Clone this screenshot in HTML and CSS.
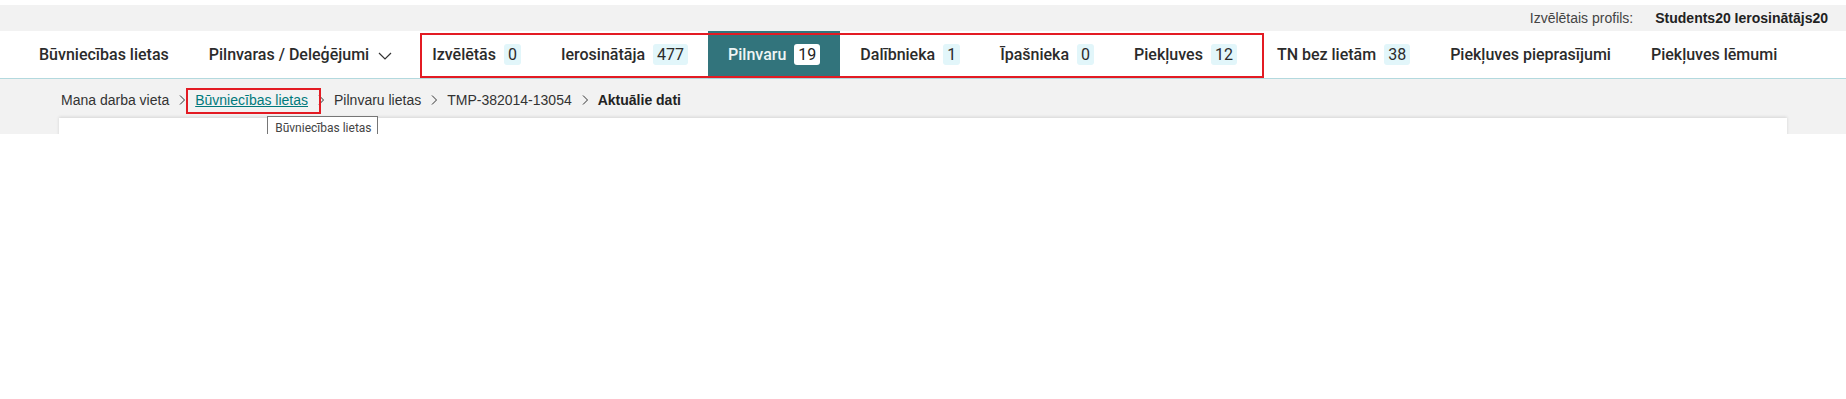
FILE: index.html
```html
<!DOCTYPE html>
<html lang="lv">
<head>
<meta charset="utf-8">
<title>Pilnvaru lietas</title>
<link rel="stylesheet" href="styles.css">
</head>
<body>
<div class="page">
  <div class="topbar">
    <span class="profile-label">Izvēlētais profils:</span>
    <span class="profile-name">Students20 Ierosinātājs20</span>
  </div>
  <nav class="nav">
    <a class="nav-item">Būvniecības lietas</a>
    <a class="nav-item">Pilnvaras / Deleģējumi
      <svg class="chev-down" width="14" height="8" viewBox="0 0 14 8"><path d="M1 1 L7 7 L13 1" fill="none" stroke="#333" stroke-width="1.2"/></svg>
    </a>
    <div class="nav-group">
      <a class="nav-item">Izvēlētās <span class="badge">0</span></a>
      <a class="nav-item">Ierosinātāja <span class="badge">477</span></a>
      <a class="nav-item active">Pilnvaru <span class="badge">19</span></a>
      <a class="nav-item">Dalībnieka <span class="badge">1</span></a>
      <a class="nav-item">Īpašnieka <span class="badge">0</span></a>
      <a class="nav-item">Piekļuves <span class="badge">12</span></a>
    </div>
    <a class="nav-item">TN bez lietām <span class="badge">38</span></a>
    <a class="nav-item">Piekļuves pieprasījumi</a>
    <a class="nav-item">Piekļuves lēmumi</a>
  </nav>
  <div class="content">
    <div class="breadcrumb">
      <span class="crumb">Mana darba vieta</span>
      <svg class="sep" width="6" height="10" viewBox="0 0 6 10"><path d="M1 0.5 L5.5 5 L1 9.5" fill="none" stroke="#333" stroke-width="1"/></svg>
      <a class="crumb link">Būvniecības lietas<span class="tooltip">Būvniecības lietas</span></a>
      <svg class="sep" width="6" height="10" viewBox="0 0 6 10"><path d="M1 0.5 L5.5 5 L1 9.5" fill="none" stroke="#333" stroke-width="1"/></svg>
      <span class="crumb">Pilnvaru lietas</span>
      <svg class="sep" width="6" height="10" viewBox="0 0 6 10"><path d="M1 0.5 L5.5 5 L1 9.5" fill="none" stroke="#333" stroke-width="1"/></svg>
      <span class="crumb">TMP-382014-13054</span>
      <svg class="sep" width="6" height="10" viewBox="0 0 6 10"><path d="M1 0.5 L5.5 5 L1 9.5" fill="none" stroke="#333" stroke-width="1"/></svg>
      <span class="crumb current">Aktuālie dati</span>
    </div>
    <div class="card"></div>
  </div>
</div>
</body>
</html>
```
FILE: styles.css
```css
html, body {
  margin: 0;
  padding: 0;
  background: #ffffff;
}

.page {
  padding-top: 5px;
  font-family: "Liberation Sans", Arial, sans-serif;
  color: #333333;
}

.topbar {
  height: 26px;
  background: #f2f2f2;
  display: flex;
  justify-content: flex-end;
  align-items: center;
  padding-right: 18px;
  font-size: 14px;
  gap: 22px;
}

.profile-label {
  color: #444444;
}

.profile-name {
  color: #222222;
  font-weight: bold;
}

.nav {
  height: 47px;
  background: #ffffff;
  border-bottom: 1px solid #b3d9de;
  display: flex;
  align-items: stretch;
  padding-left: 19px;
  font-family: Roboto, "Liberation Sans", sans-serif;
  font-size: 16px;
  font-weight: 500;
}

.nav-group {
  display: flex;
  align-items: stretch;
  position: relative;
}

.nav-group::after {
  content: "";
  position: absolute;
  left: 8px;
  right: -7px;
  top: 2px;
  bottom: 0px;
  border: 2px solid #e31b23;
  pointer-events: none;
}

.nav-item {
  display: flex;
  align-items: center;
  padding: 0 20px;
  color: #2b2b2b;
  white-space: nowrap;
}

.nav-item.active {
  background: #32747c;
  color: #eef5f5;
  border-bottom: 2px solid #a3d6dc;
  margin-bottom: -1px;
}

.badge {
  display: inline-block;
  margin-left: 8px;
  padding: 1px 4px;
  line-height: 19px;
  border-radius: 3px;
  background: #e2f6fa;
  color: #2b2b2b;
  font-weight: 400;
}

.nav-item.active .badge {
  background: #ffffff;
  color: #222222;
}

.chev-down {
  margin-left: 9px;
  margin-top: 2px;
}

.content {
  height: 55px;
  background: #f2f2f2;
  padding: 0 59px;
  overflow: hidden;
}

.breadcrumb {
  display: flex;
  align-items: center;
  height: 20px;
  padding-top: 11px;
  padding-left: 2px;
  font-size: 14px;
  color: #333333;
}

.sep {
  margin: 0 10px;
}

.crumb.link {
  color: #00797c;
  text-decoration: underline;
  position: relative;
}

.crumb.link::after {
  content: "";
  position: absolute;
  left: -9px;
  right: -13px;
  top: -4px;
  bottom: -6px;
  border: 2px solid #e31b23;
}

.crumb.current {
  font-weight: bold;
  color: #222222;
}

.tooltip {
  position: absolute;
  left: 72px;
  top: 24px;
  z-index: 3;
  background: #ffffff;
  border: 1px solid #767676;
  padding: 3px 5px 3px 7px;
  font-family: Roboto, "Open Sans", sans-serif;
  font-size: 12px;
  color: #444444;
  text-decoration: none;
  white-space: nowrap;
  line-height: 16px;
}

.card {
  margin-top: 8px;
  height: 40px;
  background: #ffffff;
  box-shadow: 0 -1px 3px rgba(0, 0, 0, 0.12);
}
```
